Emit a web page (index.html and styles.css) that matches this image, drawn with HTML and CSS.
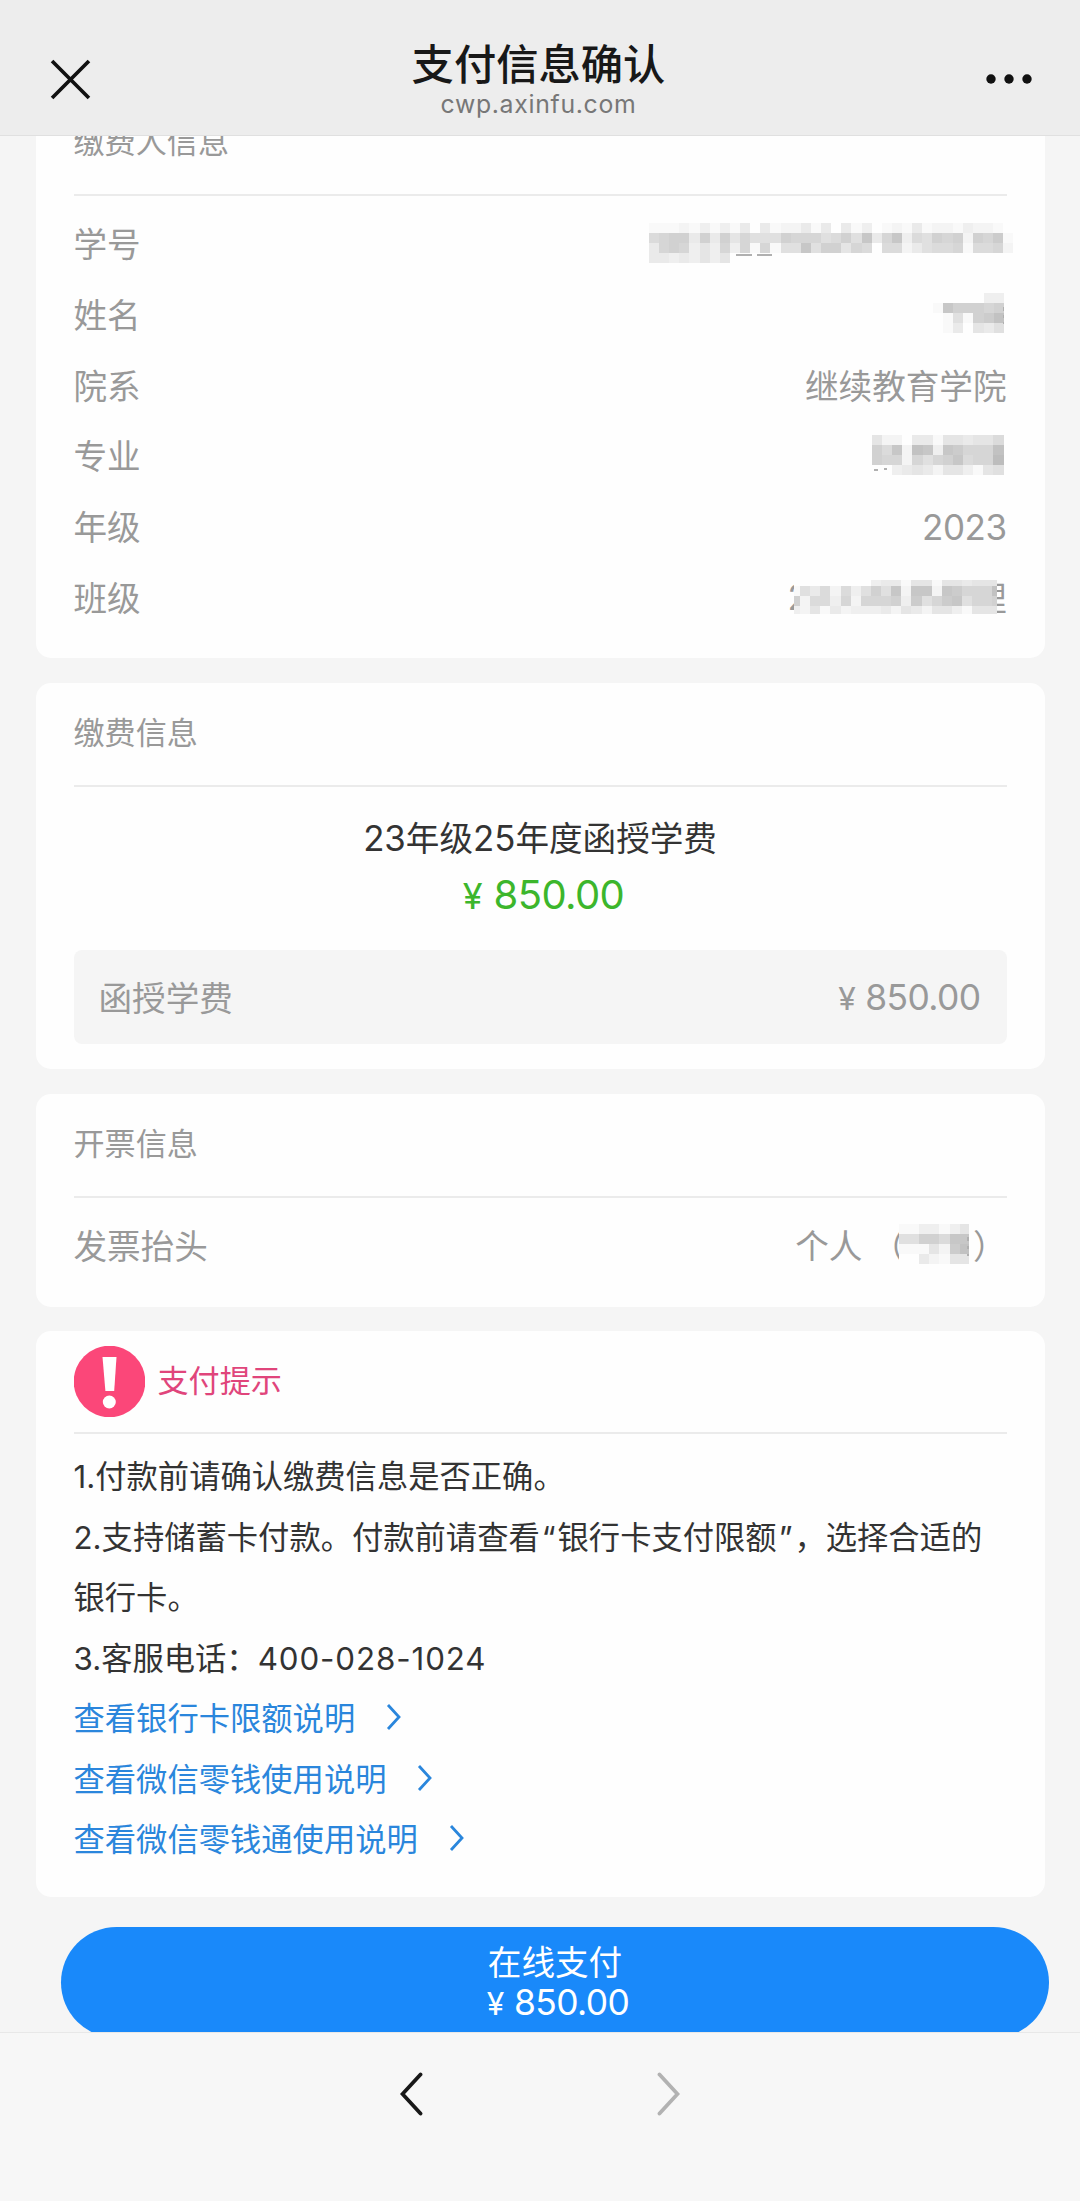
FILE: index.html
```html
<!DOCTYPE html>
<html lang="zh-CN">
<head>
<meta charset="utf-8">
<title>支付信息确认</title>
<link rel="stylesheet" href="styles.css">
</head>
<body>
<header class="topbar">
  <svg class="icon-close" viewBox="0 0 40 40"><path d="M2 2L38 38M38 2L2 38"/></svg>
  <div class="topbar-text">
    <h1>支付信息确认</h1>
    <p>cwp.axinfu.com</p>
  </div>
  <svg class="icon-more" viewBox="0 0 48 12"><circle cx="6" cy="6" r="4.7"/><circle cx="24" cy="6" r="4.7"/><circle cx="42" cy="6" r="4.7"/></svg>
</header>

<main class="page">
  <section class="card payer">
    <h2 class="card-title">缴费人信息</h2>
    <dl class="rows">
      <div class="row"><dt>学号</dt><dd><svg class="mosaic" data-mosaic="id"></svg></dd></div>
      <div class="row"><dt>姓名</dt><dd><svg class="mosaic" data-mosaic="name"></svg></dd></div>
      <div class="row"><dt>院系</dt><dd>继续教育学院</dd></div>
      <div class="row"><dt>专业</dt><dd><svg class="mosaic" data-mosaic="major"></svg></dd></div>
      <div class="row"><dt>年级</dt><dd><span class="num">2023</span></dd></div>
      <div class="row"><dt>班级</dt><dd class="class-value"><span class="num">2</span><span>理</span><svg class="mosaic" data-mosaic="klass"></svg></dd></div>
    </dl>
  </section>

  <section class="card fee">
    <h2 class="card-title">缴费信息</h2>
    <p class="fee-name"><span class="digits">23</span>年级<span class="digits">25</span>年度函授学费</p>
    <p class="fee-total"><span class="yen">¥</span>850.00</p>
    <div class="fee-item"><span>函授学费</span><span class="amount"><span class="yen">¥</span>850.00</span></div>
  </section>

  <section class="card invoice">
    <h2 class="card-title">开票信息</h2>
    <div class="row"><span>发票抬头</span><span class="invoice-name"><span>个人</span><span>（</span><svg class="mosaic" data-mosaic="invoice"></svg><span>）</span></span></div>
  </section>

  <section class="card tips">
    <h2 class="card-title tips-title">
      <svg class="icon-alert" viewBox="0 0 71 71"><circle cx="35.5" cy="35.5" r="35.8"/><path d="M28.5 11H42.5L40.2 45H31.4Z"/><circle class="dot" cx="35.3" cy="56" r="6.5"/></svg>
      <span>支付提示</span>
    </h2>
    <div class="tips-body">
      <p>1.付款前请确认缴费信息是否正确。</p>
      <p>2.支持储蓄卡付款。付款前请查看<span class="quote">“</span>银行卡支付限额<span class="quote">”</span>，选择合适的银行卡。</p>
      <p>3.客服电话：<span class="phone">400-028-1024</span></p>
      <a class="link">查看银行卡限额说明<svg viewBox="0 0 16 28"><path d="M2 2L13 14L2 26"/></svg></a>
      <a class="link">查看微信零钱使用说明<svg viewBox="0 0 16 28"><path d="M2 2L13 14L2 26"/></svg></a>
      <a class="link">查看微信零钱通使用说明<svg viewBox="0 0 16 28"><path d="M2 2L13 14L2 26"/></svg></a>
    </div>
  </section>

  <button class="pay" type="button"><span>在线支付</span><span class="amount"><span class="yen">¥</span>850.00</span></button>
</main>

<nav class="bottombar">
  <svg class="nav-icon" viewBox="0 0 24 44"><path d="M20.5 2.5L2.5 22L20.5 41.5"/></svg>
  <svg class="nav-icon disabled" viewBox="0 0 24 44"><path d="M3.5 2.5L21.5 22L3.5 41.5"/></svg>
</nav>
<script src="mosaic.js"></script>
</body>
</html>
```
FILE: styles.css
```css
* { box-sizing: border-box; margin: 0; padding: 0; }

body {
  width: 1080px;
  height: 2201px;
  display: flex;
  flex-direction: column;
  overflow: hidden;
  background: #f5f5f5;
  color: #999;
  font-family: Inter, "Noto Sans CJK SC", sans-serif;
  font-size: 33.6px;
}

h1, h2 { font-weight: 400; }
svg { display: block; flex: none; }

/* top bar */
.topbar {
  flex: none;
  height: 136px;
  padding: 36px 47px 0 50px;
  display: flex;
  justify-content: space-between;
  background: #ededed;
  border-bottom: 1px solid #e0e0e0;
}
.icon-close { width: 41px; height: 41px; margin-top: 23px; fill: none; stroke: #111; stroke-width: 3.6; }
.icon-more { width: 48px; height: 12px; margin-top: 37px; fill: #111; }
.topbar-text { text-align: center; margin-left: 1px; }
.topbar h1 { color: #181818; font-size: 42.3px; line-height: 58px; font-weight: 500; }
.topbar p { color: #777; font-size: 24.8px; line-height: 20px; letter-spacing: 0.7px; }

/* scrolled page */
.page {
  flex: none;
  height: 1896px;
  padding: 0 35.5px;
  display: flex;
  flex-direction: column;
  overflow: hidden;
}
.card { flex: none; background: #fefefe; border-radius: 15px; padding: 0 38px; }
.card-title {
  height: 103.5px;
  padding-bottom: 6px;
  display: flex;
  align-items: center;
  font-size: 31.1px;
  border-bottom: 2px solid #ebebeb;
}

.payer { height: 565.5px; margin-top: -44px; }
.rows { padding-top: 12px; }
.row { height: 70.7px; display: flex; align-items: center; justify-content: space-between; }
.row dd { display: flex; }
.num { font-size: 35px; letter-spacing: -0.5px; position: relative; top: 1px; }
.class-value { position: relative; width: 219px; justify-content: space-between; align-items: center; }
.class-value .mosaic { position: absolute; left: 6px; top: 8px; }

.fee { height: 385.5px; margin-top: 25.5px; }
.fee-name { padding-top: 23px; line-height: 56px; text-align: center; color: #333; }
.digits { font-size: 34.8px; }
.fee-total { height: 56px; line-height: 56px; padding-left: 7px; text-align: center; color: #3cb62c; font-size: 40px; letter-spacing: -0.6px; }
.yen { font-size: 0.9em; margin-right: 0.32em; }
.fee-item {
  height: 94.5px;
  margin-top: 27px;
  padding: 0 26px 0 25px;
  display: flex;
  align-items: center;
  justify-content: space-between;
  background: #f5f5f5;
  border-radius: 8px;
}
.amount { font-size: 35.4px; letter-spacing: -0.6px; }
.fee-item .amount { padding-top: 1px; }

.invoice { height: 212.5px; margin-top: 25.5px; }
.invoice .row { margin-top: 12px; }
.invoice-name { display: flex; align-items: center; }
.invoice-name > span:nth-child(2) { margin-left: 9px; }
.invoice-name .mosaic { margin: 0 4px 0 -6px; }

.tips { height: 566px; margin-top: 24px; }
.tips-title { padding: 0; gap: 13px; color: #e0457b; }
.tips-title span { padding-bottom: 5px; }
.icon-alert { width: 71px; height: 71px; fill: #fb4779; }
.icon-alert path, .icon-alert .dot { fill: #fff; }
.tips-body { padding-top: 13px; color: #333; font-size: 31.3px; line-height: 60.5px; }
.quote { margin: 0 2px; }
.phone { letter-spacing: 0.9px; }
.link { display: flex; align-items: center; gap: 31px; height: 60.5px; color: #2a86dc; }
.link svg { width: 16px; height: 28px; margin-top: -4px; fill: none; stroke: #2a86dc; stroke-width: 2.8; }

.pay {
  flex: none;
  width: 988px;
  height: 111px;
  margin: 30px 0 0 25.5px;
  padding-top: 16.5px;
  border: 0;
  border-radius: 56px;
  background: #1989fa;
  color: #fff;
  font: inherit;
  line-height: 40px;
  display: flex;
  flex-direction: column;
  align-items: center;
}
.pay .amount { padding-left: 6px; }

/* browser navigation */
.bottombar {
  flex: 1;
  padding-top: 39px;
  display: flex;
  justify-content: center;
  gap: 232px;
  background: #f7f7f7;
  border-top: 1px solid #e8e8e8;
}
.nav-icon { width: 24px; height: 44px; fill: none; stroke: #181818; stroke-width: 3.8; stroke-linecap: round; }
.nav-icon.disabled { stroke: #b2b2b2; }
```
FILE: mosaic.js
```js
// Privacy masks for personal values: one hex digit per cell, higher is darker, "." is empty.
// view is [x, y, width, height] of the visible part of the cell grid.
const CELL = 10.12;
const masks = {
  id: {
    rows: [
      "111213131404122414041301214122132210",
      "789949495866698886796b48b376989298a1",
      "489835383818166b69958707724677817782",
      "44343535"
    ],
    view: [0, 0, 364, 43], shift: [6, 2],
    marks: [[87, 30.5, 16, 2.5], [108, 30.5, 15, 2.5]]
  },
  name: {
    rows: ["....033", "1b99989", "01619ac", "0140546"],
    view: [0, 0, 71, 41], shift: [-3, 0],
    marks: [[69.5, 14, 2, 4], [69.5, 22, 2, 3], [69.5, 29, 2, 2]]
  },
  major: {
    rows: ["5220441554557", "97b2cb3ba888c", "98828689b788d", "..34542553156"],
    view: [0, 0, 132, 41], shift: [-3, 1],
    marks: [[2, 33.5, 4, 2], [12, 33, 3, 2]]
  },
  klass: {
    rows: ["........3441551554555", "1647273696b2bb2ba888c", "927738288893a68ab6889", "325142333425425531555"],
    view: [4, 4.5, 203.5, 34], shift: [0, 0], opaque: true, marks: []
  },
  invoice: {
    rows: ["1133135", "66997bb", "11152ac", "0042155"],
    view: [0, 0, 70, 41], shift: [0, 0],
    marks: [[68, 13, 2, 4], [68, 22, 2, 3], [68, 30, 2, 2]]
  }
};

document.querySelectorAll("[data-mosaic]").forEach((svg) => {
  const m = masks[svg.dataset.mosaic];
  svg.setAttribute("viewBox", m.view.join(" "));
  svg.setAttribute("width", m.view[2]);
  svg.setAttribute("height", m.view[3]);
  svg.setAttribute("shape-rendering", "crispEdges");
  if (m.shift[0] || m.shift[1]) {
    svg.style.transform = `translate(${m.shift[0]}px, ${m.shift[1]}px)`;
  }
  const rect = (x, y, w, h, fill) => {
    const r = document.createElementNS("http://www.w3.org/2000/svg", "rect");
    Object.entries({ x, y, width: w, height: h, fill }).forEach(([k, v]) => r.setAttribute(k, v));
    svg.append(r);
  };
  if (m.opaque) rect(m.view[0], m.view[1], m.view[2], m.view[3], "#fefefe");
  m.rows.forEach((row, j) => [...row].forEach((c, i) => {
    if (c === ".") return;
    const g = 254 - parseInt(c, 16) * 5;
    rect(i * CELL, j * CELL, CELL, CELL, `rgb(${g},${g},${g})`);
  }));
  m.marks.forEach(([x, y, w, h]) => rect(x, y, w, h, "#b0b0b0"));
});
```
